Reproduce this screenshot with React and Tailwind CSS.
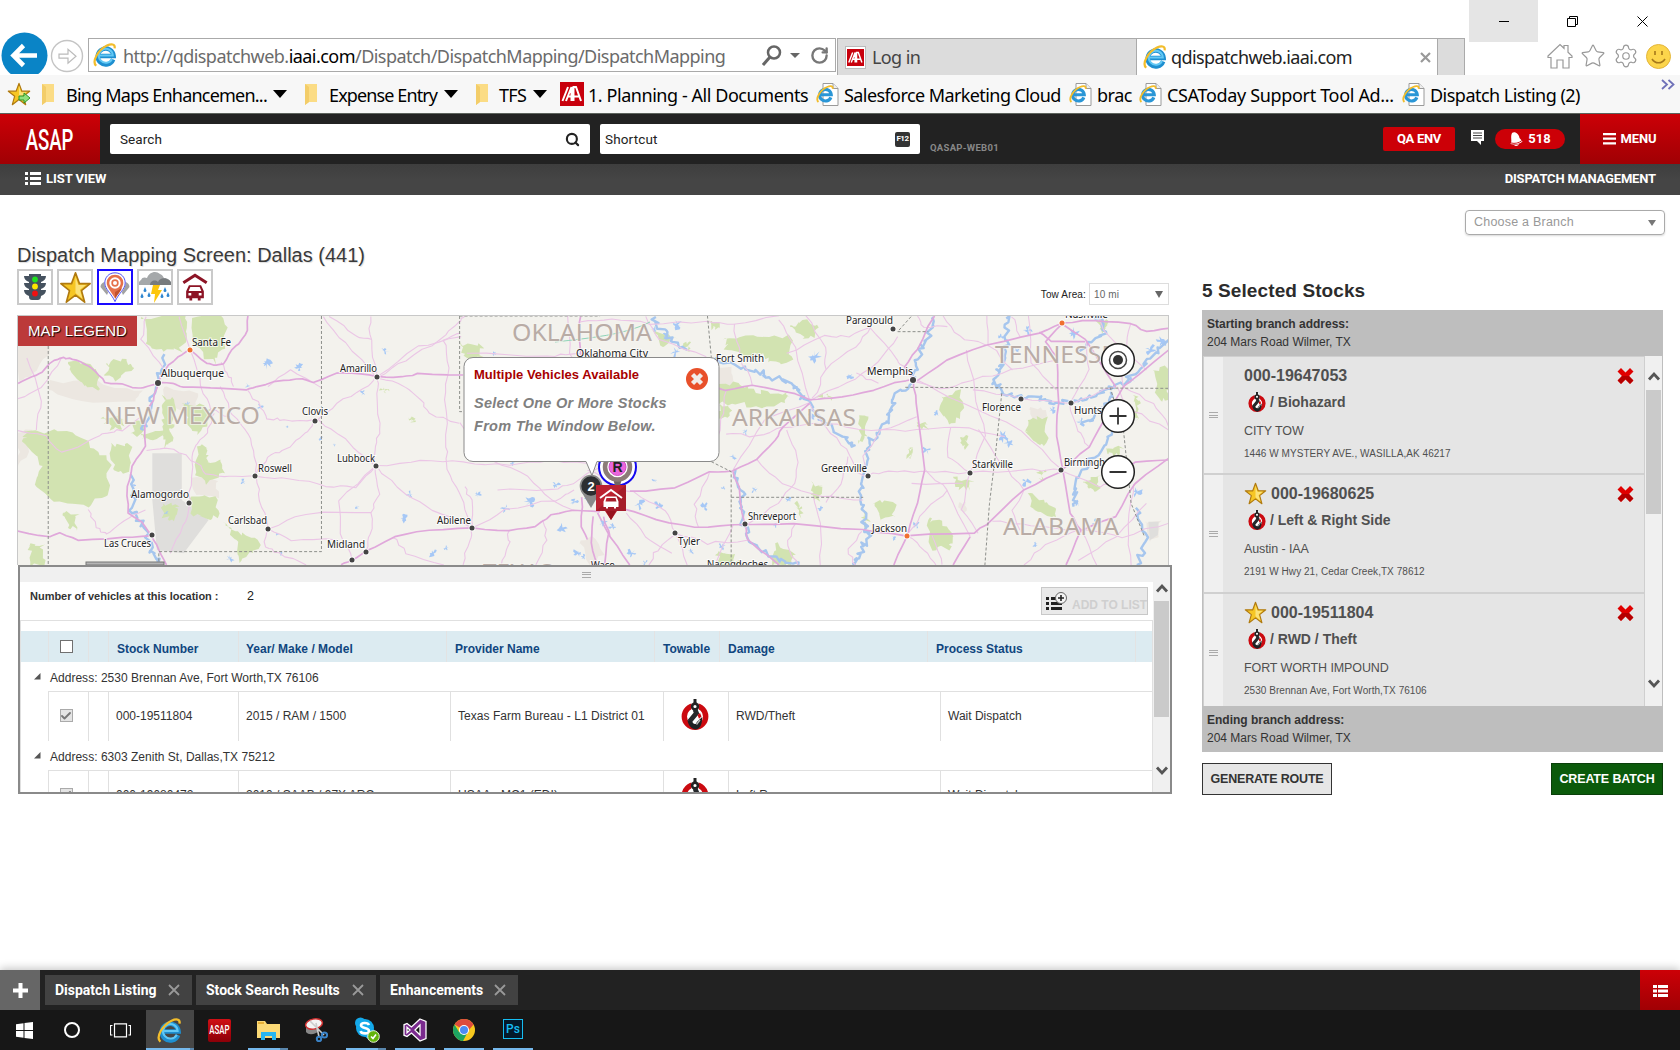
import React from 'react';
import { Search, RotateCw, Star, Settings, Check } from 'lucide-react';

const seg = "font-['Noto_Sans',sans-serif]";
const rob = "font-[Roboto,sans-serif]";

/* ---------- icons ---------- */
function IELogo({ size = 22 }) {
  return (
    <svg width={size} height={size} viewBox="0 0 24 24" className="shrink-0">
      <path d="M20.200 16.400A8 8 0 1 1 20.700 13H6.500" fill="none" stroke="#1e8fd0" strokeWidth="4.400" />
      <path d="M19 16A7 7 0 1 1 19.800 12.500H7" fill="none" stroke="#62c8f4" strokeWidth="2" />
      <path d="M3.200 22.800C-1.500 18.500 5 7 14 2.600c4-1.900 8.500-2 7.600 2.800" fill="none" stroke="#f2bd2c" strokeWidth="2.200" />
    </svg>
  );
}
function PageIE() {
  return (
    <svg width="23" height="23" viewBox="0 0 23 23" className="shrink-0">
      <path d="M7 .5h10l5 5v17H7z" fill="#fff" stroke="#9a9a9a" />
      <path d="M17 .5v5h5" fill="#eee" stroke="#9a9a9a" />
      <g transform="translate(0 2) scale(.76)">
        <path d="M19.500 16.200A7.600 7.600 0 1 1 20 12.800H6.500" fill="none" stroke="#2a96d6" strokeWidth="4.200" />
        <path d="M3.200 22.400C-1.500 18 6 6.200 14.500 2.600c4-1.800 8-2 7.600 2.600" fill="none" stroke="#f2bd2c" strokeWidth="2.400" />
      </g>
    </svg>
  );
}
function IAALogo({ size }) {
  return (
    <svg width={size} height={size} viewBox="0 0 24 24" className="shrink-0">
      <rect width="24" height="24" fill="#c8000c" />
      <path d="M2.500 19L8 5M6 19l5.500-14v14M13.500 19V5H16l5 14M8 14.500h3.500M13.500 14.500H19" fill="none" stroke="#fff" strokeWidth="2" />
    </svg>
  );
}
function Folder() {
  return (
    <svg width="14" height="23" viewBox="0 0 14 23" className="shrink-0">
      <path d="M1 1h12v18H5L1 22z" fill="#fbdc85" />
      <path d="M1 1l4 3v15L1 22z" fill="#f3cd69" />
    </svg>
  );
}
function Caret() {
  return <span className="h-0 w-0 shrink-0 border-x-[7px] border-t-[8px] border-x-transparent border-t-black" />;
}
function GoldStar({ size }) {
  return (
    <svg width={size} height={size} viewBox="0 0 36 36" className="shrink-0">
      <path d="M18 2l4.300 11.800H34l-9.500 7.500L28 34l-10-7.600L8 34l3.500-12.700L2 13.800h11.700z" fill="#f6c624" stroke="#b07a10" strokeWidth="1.800" strokeLinejoin="round" />
      <path d="M18 6v18l7.500 6-2.700-9.500 6.500-5.200H21z" fill="#fbe27a" />
    </svg>
  );
}
function Hook({ w, h }) {
  return (
    <svg width={w} height={h} viewBox="0 0 28 31" className="shrink-0">
      <circle cx="14" cy="17.500" r="10.700" fill="#fff" stroke="#cb0a10" strokeWidth="5.400" />
      <path d="M10.500 2h7v9h-7z" fill="#fff" />
      <path d="M14 0v5" stroke="#222" strokeWidth="3" />
      <circle cx="14" cy="7.500" r="2.900" fill="#fff" stroke="#222" strokeWidth="2.600" />
      <path d="M14 10.500l1.500 3.500-7 8.500" fill="none" stroke="#26282b" strokeWidth="4.800" />
      <path d="M6.500 21c.5 5.500 4.500 9.500 8.500 9.500 4.500-.4 6.200-6 6.200-12.500l-5.400 5c-.5 2.500-3 3-4.500-.2z" fill="#1f2225" />
      <path d="M16.500 16l2.500-2 1.500 3.500-2.500 2.200z" fill="#cb0a10" />
      <path d="M15.500 25.500l3.500-4.500" stroke="#bbb" strokeWidth="1.300" />
    </svg>
  );
}
function GarageCar({ color, size }) {
  return (
    <svg width={size} height={size} viewBox="0 0 28 30" className="shrink-0">
      <path d="M1.500 10.500L14 2.500 26.500 10.500" fill="none" stroke={color} strokeWidth="3.200" />
      <path fillRule="evenodd" fill={color} d="M7.500 13h13l3 6.500V27h-3.500v2.500h-3V27H11v2.500H8V27H4.500v-7.500zM9 15l-1.800 4.200h13.600L19 15zM7 21.500v2.500h3v-2.500zM18 21.500v2.500h3v-2.500z" />
    </svg>
  );
}
function RedX() {
  return (
    <svg width="17" height="18" viewBox="0 0 17 18" className="shrink-0">
      <path d="M4 1l4.500 4.500L13 1l3.500 3.500L12 9l4.500 4.500L13 17l-4.500-4.500L4 17 .5 13.500 5 9 .5 4.500z" fill="#e00000" />
      <path d="M.8 13.500L5 9h7l4.200 4.500L13 16.700l-4.500-4.500L4 16.700z" fill="#b40000" />
    </svg>
  );
}
function Chevron({ up }) {
  return (
    <svg width="14" height="11" viewBox="0 0 14 11">
      <path d={up ? 'M2 8.500L7 3l5 5.500' : 'M2 2.500L7 8l5-5.500'} fill="none" stroke="#555" strokeWidth="2.800" />
    </svg>
  );
}
function Grip() {
  return (
    <span className="flex h-[6px] w-[9px] flex-col justify-between">
      <i className="h-px bg-[#aaa]" /><i className="h-px bg-[#aaa]" /><i className="h-px bg-[#aaa]" />
    </span>
  );
}

/* ---------- browser chrome ---------- */
function Chrome() {
  return (
    <div className={`flex h-[75px] bg-white ${seg}`}>
      <div className="flex w-[1465px] items-end">
        <div className="mb-px h-[42px] w-[50px] overflow-hidden pl-px">
          <svg width="47" height="47" viewBox="0 0 47 47">
            <circle cx="23.500" cy="23.500" r="23" fill="#0a84c6" />
            <path d="M36 23.500H14M22.500 13.500l-10 10 10 10" fill="none" stroke="#fff" strokeWidth="4.600" />
          </svg>
        </div>
        <svg width="35" height="35" viewBox="0 0 35 35" className="mb-[1px]">
          <circle cx="17" cy="17" r="15.500" fill="#fff" stroke="#c4c4c4" strokeWidth="1.400" />
          <path d="M9 15.200h9v-5l8 7-8 7v-5H9z" fill="none" stroke="#bbb" strokeWidth="1.200" />
        </svg>
        <div className="mb-[3px] ml-[3px] flex h-[34px] w-[748px] items-center border border-[#aaa] pl-[4px]">
          <IELogo size={24} />
          <span className="ml-[6px] w-[604px] whitespace-nowrap pt-[2px] text-[18px] tracking-[-0.540px] text-[#6b6b6b]">
            http://qdispatchweb.<span className="text-black">iaai.com</span>/Dispatch/DispatchMapping/DispatchMapping
          </span>
          <svg className="ml-[35px]" width="20" height="21" viewBox="0 0 20 21"><circle cx="12" cy="7.500" r="6" fill="none" stroke="#666" strokeWidth="2.500" /><path d="M8 12l-7 8" stroke="#666" strokeWidth="3" /></svg>
          <span className="ml-[8px] border-x-[5px] border-t-[5px] border-x-transparent border-t-[#666]" />
          <RotateCw className="ml-[10px] text-[#777]" size={19} strokeWidth={3} />
        </div>
        <div className="ml-px flex h-[37px] w-[300px] items-center border border-b-0 border-[#aaa] bg-[#dcdcdc] pl-[7px]">
          <span className="flex h-[23px] w-[21px] items-center justify-center border border-[#bbb] bg-white"><IAALogo size={17} /></span>
          <span className="ml-[6px] text-[18px] tracking-[-0.600px] text-[#444]">Log in</span>
        </div>
        <div className="flex h-[37px] w-[300px] items-center border-t border-[#aaa] bg-white pl-[6px]">
          <IELogo size={24} />
          <span className="ml-[4px] w-[183px] whitespace-nowrap text-[18px] tracking-[-0.600px] text-[#222]">qdispatchweb.iaai.com</span>
          <svg className="ml-[66px]" width="11" height="11" viewBox="0 0 11 11"><path d="M1 1l9 9M10 1l-9 9" stroke="#999" strokeWidth="2.200" /></svg>
        </div>
        <div className="h-[37px] w-[28px] border border-b-0 border-[#aaa] bg-[#dcdcdc]" />
      </div>
      <div className="ml-[4px] flex w-[211px] flex-col">
        <div className="flex h-[42px]">
          <div className="flex w-[69px] items-center justify-center bg-[#e5e5e5]"><i className="h-px w-[10px] bg-black" /></div>
          <div className="flex w-[69px] items-center justify-center">
            <svg width="11" height="11" viewBox="0 0 11 11" fill="none" stroke="#000"><path d="M.5 2.500h8v8h-8zM2.500 2.500v-2h8v8h-2" /></svg>
          </div>
          <div className="flex w-[70px] items-center justify-center">
            <svg width="11" height="11" viewBox="0 0 11 11" stroke="#000"><path d="M.5.5l10 10M10.500.5l-10 10" /></svg>
          </div>
        </div>
        <div className="mt-[1px] flex items-center gap-[7px] pl-[78px] text-[#999]">
          <svg width="26" height="26" viewBox="0 0 26 26" fill="none" stroke="#999" strokeWidth="1.200"><path d="M1 13L13 1.500l4 3.800V2.500h4v6.800l4 3.700v1.500h-3V25h-6v-8h-6v8H4V14.500H1z" /></svg>
          <Star size={26} strokeWidth={1.100} />
          <Settings size={26} strokeWidth={1.100} />
          <svg width="25" height="25" viewBox="0 0 25 25">
            <circle cx="12.500" cy="12.500" r="12" fill="#fcd54b" stroke="#e3b53a" />
            <path d="M9 7v4M16 7v4M6 15c3 5 10 5 13 0" fill="none" stroke="#a5781b" strokeWidth="1.600" />
          </svg>
        </div>
      </div>
    </div>
  );
}

function Favorites() {
  const t = 'whitespace-nowrap pt-[2px] text-[18px] leading-[24px] text-black';
  return (
    <div className={`flex h-[39px] items-center border-b border-[#5c625c] bg-[#f7f7f7] pl-[7px] ${seg}`}>
      <span className="relative flex">
        <GoldStar size={24} />
        <svg className="absolute bottom-[2px] right-0" width="13" height="12" viewBox="0 0 13 12"><path d="M1 4h5V1l6 5-6 5V8H1z" fill="#8fe07c" stroke="#2d9424" /></svg>
      </span>
      <span className="ml-[10px] flex w-[263px] items-center"><Folder /><span className={`ml-[11px] w-[201px] tracking-[-0.780px] ${t}`}>Bing Maps Enhancemen...</span><span className="ml-[6px] flex"><Caret /></span></span>
      <span className="flex w-[171px] items-center"><Folder /><span className={`ml-[11px] w-[110px] tracking-[-0.880px] ${t}`}>Expense Entry</span><span className="ml-[5px] flex"><Caret /></span></span>
      <span className="flex w-[85px] items-center"><Folder /><span className={`ml-[10px] w-[29px] tracking-[-0.700px] ${t}`}>TFS</span><span className="ml-[5px] flex"><Caret /></span></span>
      <IAALogo size={24} />
      <span className={`ml-[4px] w-[228px] tracking-[-0.440px] ${t}`}>1. Planning - All Documents</span>
      <PageIE /><span className={`ml-[5px] w-[225px] tracking-[-0.580px] ${t}`}>Salesforce Marketing Cloud</span>
      <PageIE /><span className={`ml-[5px] w-[42px] tracking-[-0.500px] ${t}`}>brac</span>
      <PageIE /><span className={`ml-[5px] w-[235px] tracking-[-0.330px] ${t}`}>CSAToday Support Tool Ad...</span>
      <PageIE /><span className={`ml-[5px] w-[231px] tracking-[-0.520px] ${t}`}>Dispatch Listing (2)</span>
      <svg className="mb-[20px]" width="14" height="11" viewBox="0 0 14 11"><path d="M1 1l5 4.500L1 10M7.500 1l5 4.500-5 4.500" fill="none" stroke="#6f71b8" strokeWidth="1.800" /></svg>
    </div>
  );
}

/* ---------- application header ---------- */
function AppHeader() {
  return (
    <>
      <div className={`flex h-[50px] items-center bg-[#222] ${rob}`}>
        <div className="flex h-full w-[100px] items-center justify-center overflow-hidden bg-gradient-to-b from-[#cc0007] to-[#a00004]">
          <span className="scale-x-[.62] pt-[2px] text-[30px] font-medium leading-none text-white">ASAP</span>
        </div>
        <div className="ml-[10px] flex h-[30px] w-[480px] items-center justify-between rounded-[2px] bg-white pl-[10px] pr-[10px] text-[13.500px] tracking-[0.100px] text-[#222]">
          Search<Search size={15} strokeWidth={3.400} />
        </div>
        <div className="ml-[10px] flex h-[30px] w-[320px] items-center justify-between rounded-[2px] bg-white pl-[5px] pr-[10px] text-[13.500px] tracking-[0.150px] text-[#222]">
          Shortcut<span className="flex h-[15px] w-[15px] items-center justify-center rounded-[2px] bg-[#333] text-[8px] font-bold tracking-[-0.500px] text-white">F12</span>
        </div>
        <span className="ml-[10px] mt-[18px] w-[453px] text-[9.500px] font-bold tracking-[0.300px] text-[#888]">QASAP-WEB01</span>
        <div className="flex h-[24px] w-[72px] items-center justify-center rounded-[2px] bg-[#cc0007] text-[13px] font-bold tracking-[-0.300px] text-white">QA ENV</div>
        <svg className="mb-[2px] ml-[15px]" width="15" height="16" viewBox="0 0 15 16">
          <path d="M1 0h13v11h-3v4l-4-4H1z" fill="#fff" /><path d="M3 3h9M3 5.500h9M3 8h9" stroke="#444" strokeWidth="1.200" />
        </svg>
        <div className="ml-[10px] flex h-[20px] w-[70px] items-center justify-center gap-[5px] rounded-full bg-[#cc0007] text-[13px] font-bold text-white">
          <svg width="14" height="14" viewBox="0 0 14 14"><path d="M3 1c3-2 7 1 7.500 5l3 3.500C11 12 5 13 1.500 12 3.500 9 1 5 3 1z" fill="#fff" /><path d="M2 11c4 1 8 0 11-2.500" fill="none" stroke="#cc0007" strokeWidth=".9" /><path d="M5 13c1.500 1.500 4 1 5-.8" fill="#fff" /></svg>
          518
        </div>
        <div className="ml-[15px] flex h-full w-[100px] items-center justify-center gap-[4px] bg-gradient-to-b from-[#cc0007] to-[#a00004] text-[13px] font-bold tracking-[-0.100px] text-white">
          <svg width="13" height="12" viewBox="0 0 13 12"><path d="M0 0h13v2.200H0zM0 4.600h13v2.200H0zM0 9.200h13v2.200H0z" fill="#fff" /></svg>
          MENU
        </div>
      </div>
      <div className={`flex h-[31px] items-center justify-between bg-gradient-to-b from-[#3e3e3e] via-[#454545] to-[#454545] pb-[2px] pl-[25px] pr-[24px] text-[13px] font-bold text-white ${rob}`}>
        <span className="flex items-center gap-[5px] tracking-[-0.050px]">
          <svg width="16" height="13" viewBox="0 0 16 13"><path d="M0 0h3v3H0zM5 0h11v3H5zM0 5h3v3H0zM5 5h11v3H5zM0 10h3v3H0zM5 10h11v3H5z" fill="#fff" /></svg>
          LIST VIEW
        </span>
        <span className="tracking-[-0.160px]">DISPATCH MANAGEMENT</span>
      </div>
    </>
  );
}

/* ---------- map ---------- */
function noise(seed) {
  let s = seed * 7919 + 13;
  return () => {
    s = (s * 16807) % 2147483647;
    return s / 2147483647 - 0.5;
  };
}
function rough(str, amp, steps, close) {
  const p = str.split(' ').map((q) => q.split(',').map(Number));
  if (close) p.push(p[0]);
  const r = noise(p[0][0] + p.length);
  const out = [];
  for (let i = 0; i < p.length - 1; i++) {
    for (let k = 0; k < steps; k++) {
      const t = k / steps;
      out.push([
        p[i][0] + (p[i + 1][0] - p[i][0]) * t + r() * amp,
        p[i][1] + (p[i + 1][1] - p[i][1]) * t + r() * amp,
      ]);
    }
  }
  out.push(p[p.length - 1]);
  return out.map((q) => q.map((v) => v.toFixed(1)).join(',')).join(' ');
}
function blob(x, y, s) {
  const r = noise(Math.round(x * 3 + y));
  const out = [];
  for (let i = 0; i < 16; i++) {
    const a = (i / 16) * Math.PI * 2;
    const d = s * (0.65 + r() * 1.3);
    out.push(`${(x + Math.cos(a) * d).toFixed(1)},${(y + Math.sin(a) * d * 1.1).toFixed(1)}`);
  }
  return out.join(' ');
}

const WEST = {
  sand: [
    '47,348 125,348 125,470 90,520 47,540', '130,545 250,545 300,560 370,575 350,600 210,605 130,570',
    '430,560 520,580 510,640 430,620', '500,830 568,840 568,890 510,890', '47,700 80,690 70,760 47,800',
  ],
  gray: ['398,760 475,760 475,900 545,960 480,1060 410,1050 398,900'],
  green: [
    '370,350 490,350 490,400 470,450 420,450 380,420', '502,350 590,348 585,440 560,490 510,440',
    '178,485 230,490 260,530 258,570 215,555 190,520', '280,490 330,475 345,510 300,540 275,530',
    '70,700 180,690 240,740 285,780 280,880 230,915 140,910 90,850 110,790 60,720',
    '292,735 340,730 335,820 295,810', '345,670 378,665 370,700 345,705', '270,650 320,648 320,680 290,690',
    '430,590 455,600 455,680 425,700 425,640', '480,610 540,620 555,650 515,710 490,660', '515,740 540,740 540,790 580,785 580,820 545,850 510,830',
    '500,890 568,890 568,950 530,955 498,940', '590,970 625,1000 680,1025 650,1060 620,1085 615,1020',
    '165,935 200,940 200,985 185,980', '80,1035 110,1030 115,1095 80,1095', '1205,430 1258,430 1258,468 1235,485 1210,465',
    '430,670 450,720 430,740', '1068,655 1085,655 1080,662', '995,565 1010,570 1005,580', '425,915 465,915 460,960 430,950', '370,700 430,690 420,715 375,720',
  ],
  hwy: [
    '47,550 85,530 110,515 140,480 165,473 190,478 220,490 250,515 275,548 320,552 360,566 385,560 412,549 450,550 480,562 550,564 645,571 670,560 740,540 790,538 820,546 880,520 920,518 985,530 1050,532 1090,522 1210,525',
    '648,348 648,390 625,430 605,450 585,490 565,497 540,490 497,450 465,470 430,510 412,549 400,600 378,650 380,740 345,800 333,860 335,940 370,965 397,1005 415,1050 435,1095',
    '47,995 130,1012 155,998 205,1023 320,1012 397,1007',
    '890,1095 920,1080 956,1055 1030,1010 1120,990 1235,984 1330,994 1400,978 1440,945 1500,932 1568,935',
    '1518,348 1512,400 1520,480', '1520,890 1520,980 1548,1050 1548,1095', '1560,940 1590,1000 1580,1095',
  ],
  road: [
    '985,530 985,600 993,690 980,740 980,798', '983,798 1100,785 1210,786 1330,795 1440,780 1568,795', '965,348 968,420 985,530', '860,348 930,410 970,418', '985,530 1060,480 1150,420 1200,365 1215,348',
    '985,530 1060,560 1100,600 1120,640 1200,670', '1205,400 1160,420 1170,500 1165,600 1165,740 1170,810 1200,880 1235,984',
    '820,663 745,660 700,655 680,615 648,572', '820,670 800,700 740,750 700,770 668,828', '985,530 950,570 880,610 830,660', '830,660 900,720 980,798',
    '668,828 760,835 850,860 930,860 980,800', '668,828 665,750 640,690 600,630 575,560', '500,455 525,560 555,630 600,650', '668,828 680,900 700,987 800,940 970,938',
    '980,800 885,900 890,1000 920,1080', '700,987 690,1040 730,1060 800,1095', '495,909 500,800 510,740 540,700 560,640', '495,909 480,980 445,1060',
    '385,748 450,745 515,790 540,820 600,830 668,828', '47,690 120,710 160,760 220,730 270,700 320,690 370,650', '70,470 110,600 95,690', '230,925 250,980 280,1005 320,960 380,930',
    '980,800 1060,880 1130,930 1235,984', '1235,984 1225,1020 1210,1095', '1235,984 1230,900 1215,860', '1030,1010 1060,1060 1160,1095', '840,560 760,510 700,560',
    '1200,670 1290,780 1380,830 1440,900 1500,932', '1568,800 1500,850 1440,870 1300,870', '985,530 900,430 845,350', '985,530 1090,440 1205,410', '470,350 497,450', '380,348 370,420 430,510',
    '1330,994 1330,1040 1310,1095', '1420,960 1430,1020 1400,1095', '1235,984 1320,930 1450,900 1500,870', '955,1055 970,1000 970,938 990,880 980,800', '575,490 600,530 610,560', '47,600 110,560 160,475',
    '1568,470 1500,460 1430,470 1220,460', '1480,348 1490,460 1530,520', '700,990 760,1020 880,1020',
  ],
  river: ['435,470 400,560 390,640 375,690', '350,820 345,930 375,970 400,1060 420,1095'],
  dash: ['126,348 126,1095', '840,348 840,1055 415,1055 415,1095', '1201,348 1201,635 1225,635', '1201,348 1568,348'],
  lakes: [[697, 490, 13], [782, 503, 11], [1005, 453, 11], [648, 558, 8], [490, 612, 7], [680, 620, 8], [948, 578, 7], [838, 715, 6], [635, 845, 7], [1072, 885, 10], [1055, 955, 11], [932, 922, 6], [1248, 883, 10], [1320, 925, 11], [1385, 905, 14], [1452, 855, 11], [1468, 985, 12], [1500, 905, 10], [1132, 1060, 12], [1165, 1045, 6], [1510, 1060, 12], [725, 1003, 6], [735, 1058, 7], [600, 1075, 11], [1290, 462, 8], [873, 735, 4], [348, 855, 8], [435, 940, 6], [1340, 790, 7], [750, 680, 4]],
};
const EAST = {
  sand: ['1170,415 1215,415 1215,450 1180,445', '1480,755 1515,755 1515,795 1490,820', '990,700 1010,700 1010,725 990,725', '0,820 30,800 60,850 20,885', '340,300 390,290 400,350 350,370'],
  gray: ['1485,755 1512,755 1510,795 1490,810'],
  green: [
    '380,205 450,200 550,200 550,275 500,280 480,250 430,260 380,240', '340,155 360,155 360,175 345,175', '550,165 590,150 625,165 610,205 575,195', '340,355 400,340 440,355 490,370 545,365 540,400 460,410 400,400 340,395',
    '945,380 1000,360 995,440 960,460 940,420', '1170,450 1220,440 1220,520 1190,525 1168,490', '730,445 755,440 745,500 730,515', '1000,500 1012,500 1010,535 998,530', '770,700 825,690 820,740 785,750', '910,750 940,755 970,800 968,835 915,835',
    '1170,670 1210,690 1245,720 1235,745 1190,725', '975,620 1025,630 1020,655 985,655', '1320,630 1360,610 1355,660 1330,660', '510,820 560,850 555,885 500,885', '1500,300 1538,290 1538,390 1510,390', '1378,535 1415,530 1412,555 1380,550', '1450,380 1465,400 1455,450 1447,430',
    '860,540 872,540 868,560 855,560', '885,460 905,460 905,475 885,475', '560,700 580,710 575,740', '610,640 630,650 625,690 610,680', '190,180 250,200 220,235', '270,220 295,215 280,245', '370,400 400,420 370,450 360,430', '620,380 645,375 660,390', '1350,150 1385,155 1370,185', '360,850 400,860 430,885 360,885', '740,720 752,750 742,780', '1195,610 1215,600 1205,630',
  ],
  hwy: [
    '870,330 820,340 740,370 660,385 600,390 560,370 450,345 380,360 350,350', '880,330 960,270 1060,225 1200,190 1260,160', '110,715 200,750 300,773 400,765 560,762 740,780 850,797 1030,790 1075,750 1160,660 1250,610 1260,600',
    '130,665 250,655 340,605 400,603 460,570 510,510 530,470 600,400', '925,137 880,240 850,290 870,330 880,400 900,600 880,700 855,797 820,885', '1260,160 1215,215 1245,260 1250,400 1245,500 1260,600 1280,730 1310,780 1270,885',
    '1260,160 1320,210 1400,350', '1260,160 1340,150 1440,160 1480,185 1538,175', '1200,185 1230,215 1320,215', '1260,600 1330,530 1370,450 1420,350 1538,240', '1310,780 1400,740 1450,640 1538,565', '1390,640 1450,575 1538,570',
    '35,740 30,820 45,885', '60,740 80,800 130,885', '398,603 415,650 430,765 440,810 520,885', '1020,800 975,885',
  ],
  road: [
    '870,330 1000,400 1150,480 1260,600', '1260,600 1350,650 1390,640', '0,155 80,150 180,160 330,155 400,160 520,137', '400,160 420,260 450,345', '520,150 560,230 600,390', '610,385 640,300 720,230 760,170', '760,170 700,200 640,200 540,250', '760,170 830,270 850,290', '600,390 700,340 780,280 830,200',
    '600,400 640,470 700,540 720,600 750,620', '600,400 480,450 400,600', '530,470 640,460 760,480 880,480 980,470 1110,500', '460,570 530,640 630,680 740,690', '750,617 810,600 890,605 1020,610 1160,600 1260,600', '750,617 740,560 790,480 880,440',
    '870,330 940,360 1020,330 1130,300 1245,270', '1020,608 1000,720 1040,790', '900,600 960,660 1020,800', '1020,608 1060,500 1030,360 1010,240', '1030,360 1150,385 1280,400 1400,350', '1040,480 1100,580 1160,660', '855,797 900,720 960,660',
    '855,797 900,840 930,885', '430,765 520,700 560,640 570,560 540,480', '630,885 630,760 610,680', '250,790 220,720 140,665', '250,790 330,820 440,810', '250,790 200,840 180,885', '250,790 280,885', '340,605 300,700 310,773', '120,730 170,800 240,850',
    '170,137 210,210 330,260', '950,137 990,200 1060,225', '1060,137 1070,225 1130,300', '1320,210 1330,300 1280,400', '1400,350 1440,420 1538,480', '1280,400 1300,480 1330,530', '1310,780 1220,820 1160,885', '1310,780 1350,885', '1310,780 1420,800 1538,760',
    '1450,640 1430,760 1440,885', '1150,780 1130,720 1160,660', '880,137 900,170 960,170', '1130,137 1150,200', '740,780 700,840 720,885', '560,762 540,830 570,885', '950,885 920,797', '640,300 640,230 590,137', '720,310 780,340', '1075,750 1180,770 1310,780',
    '1420,350 1500,400 1538,470', '1350,137 1370,190 1480,300', '1440,160 1420,250 1420,350', '380,360 370,450 340,570', '380,490 460,500 530,470', '640,700 680,640 700,560', '870,640 1000,640', '1300,870 1400,800 1480,700', '20,600 90,640 130,665', '1170,137 1180,280 1245,360', '970,470 960,560 1020,608', '350,885 400,765',
  ],
  river: [
    '925,140 910,200 885,260 870,330 820,380 810,440 780,490 750,520 740,600 735,680 745,760 755,800 730,850 720,885', '350,270 430,290 500,320 560,345 590,390 640,460 700,510 720,525',
    '1120,137 1115,220 1100,290 1080,330 1100,370 1180,380 1230,400 1300,390 1360,370 1420,340 1480,280 1538,210', '1400,480 1340,560 1300,640 1290,710', '395,600 430,660 420,740 450,820 520,870 570,885', '1455,720 1480,800 1455,885', '190,137 230,200 280,240', '1310,470 1370,420 1390,370', '1300,240 1370,190 1350,137',
  ],
  dash: ['333,137 343,260 343,300', '343,575 395,605 395,885', '395,682 740,682', '865,140 830,185 910,185', '850,352 1538,355', '1102,370 1085,560 1070,700 1058,885', '1385,352 1420,480 1440,700 1475,800'],
  lakes: [[612, 260, 17], [705, 320, 9], [605, 440, 11], [432, 485, 9], [400, 560, 11], [255, 165, 12], [250, 245, 14], [195, 180, 9], [195, 632, 7], [325, 710, 11], [155, 702, 14], [205, 705, 12], [85, 770, 11], [135, 850, 12], [290, 845, 8], [370, 830, 11], [455, 660, 8], [375, 655, 6], [905, 540, 11], [930, 430, 8], [1105, 500, 14], [1120, 520, 11], [1165, 635, 12], [1170, 180, 12], [1290, 190, 14], [1140, 240, 8], [1310, 455, 12], [1235, 420, 9], [1190, 825, 8], [1455, 665, 14], [1350, 760, 11], [880, 765, 12], [1490, 240, 14], [1520, 215, 14], [1440, 330, 12], [630, 715, 8], [545, 690, 8], [510, 765, 9], [820, 805, 6], [225, 200, 12], [1300, 700, 9], [20, 690, 9], [60, 760, 11], [10, 860, 8], [170, 880, 9], [1100, 200, 8], [480, 315, 8]],
};
function MapLayer({ d, transform }) {
  const v = { vectorEffect: 'non-scaling-stroke' };
  return (
    <g transform={transform} fill="none" strokeLinejoin="round">
      {d.sand.map((p) => <polygon key={p} points={rough(p, 12, 4, true)} fill="#ece7e1" />)}
      {d.gray.map((p) => <polygon key={p} points={p} fill="#dfdedc" />)}
      {d.green.map((p) => <polygon key={p} points={rough(p, 16, 5, true)} fill="#d2e3b1" />)}
      {d.lakes.map(([x, y, s]) => <polygon key={`${x}-${y}`} points={blob(x, y, s)} fill="#a6c8f6" />)}
      {d.river.map((p) => <polyline key={p} points={rough(p, 18, 8)} stroke="#a6c6ee" strokeWidth="2.400" {...v} />)}
      {d.road.map((p) => <polyline key={p} points={rough(p, 8, 4)} stroke="#ebc6e6" strokeWidth="1.100" {...v} />)}
      {d.hwy.map((p) => <polyline key={p} points={rough(p, 4, 3)} stroke="#e0a8db" strokeWidth="1.700" {...v} />)}
      {d.dash.map((p) => <polyline key={p} points={p} stroke="#8d8f8b" strokeWidth="1" strokeDasharray="3 2" {...v} />)}
    </g>
  );
}
const STATES = [
  ['NEW MEXICO', 104, 424, 156], ['OKLAHOMA', 512, 341, 140], ['ARKANSAS', 732, 426, 124], ['TENNESSEE', 995, 363, 134], ['ALABAMA', 1003, 535, 116], ['TEXAS', 483, 581, 70],
];
const TOWNS = [
  ['Santa Fe', 192, 346, 39, 190, 350, 1], ['Albuquerque', 161, 377, 63, 158, 383, 2], ['Amarillo', 340, 372, 37, 377, 377], ['Clovis', 302, 415, 26, 315, 421], ['Lubbock', 337, 462, 38, 376, 466],
  ['Roswell', 258, 472, 34, 255, 476], ['Alamogordo', 131, 498, 58, 189, 503], ['Carlsbad', 228, 524, 39, 268, 529], ['Las Cruces', 104, 547, 47, 152, 535], ['Midland', 327, 548, 38, 366, 552],
  ['', 0, 0, 0, 352, 560], ['Abilene', 437, 524, 34, 472, 528], ['Oklahoma City', 576, 357, 72, 0, 0], ['Fort Smith', 716, 362, 48, 0, 0], ['Paragould', 846, 324, 47, 893, 329], ['Memphis', 867, 375, 46, 913, 380, 2],
  ['Florence', 982, 411, 39, 1021, 399], ['Huntsville', 1074, 414, 46, 1071, 403], ['Starkville', 972, 468, 41, 970, 473], ['Birmingham', 1064, 466, 55, 1061, 470], ['Greenville', 821, 472, 46, 868, 476],
  ['Jackson', 872, 532, 35, 907, 536, 1], ['Shreveport', 748, 520, 48, 745, 524], ['Tyler', 678, 545, 22, 675, 533], ['Nashville', 1065, 318, 43, 1062, 323, 1], ['Nacogdoches', 707, 568, 61, 0, 0], ['Waco', 591, 569, 24, 0, 0],
];
function MapView() {
  return (
    <div className="relative h-[250px] w-[1152px] overflow-hidden border border-b-0 border-[#c8c8c8]">
      <svg width="1150" height="249" viewBox="18 316 1150 249" className="block">
        <rect x="18" y="316" width="1150" height="249" fill="#f3f2ed" />
        <MapLayer d={WEST} transform="translate(0 200) scale(.3827 .3333)" />
        <MapLayer d={EAST} transform="translate(580 270) scale(.3827 .3333)" />
        <path d="M555 342C590 338 625 335 650 322" fill="none" stroke="#8fd4b8" strokeWidth="1" />
        <g fill="#b9aca6" stroke="#f6f5f1" strokeOpacity=".7" strokeWidth="2" paintOrder="stroke" fontSize="23.500" fontFamily="'Noto Sans', sans-serif">
          {STATES.map(([n, x, y, w]) => <text key={n} x={x} y={y} textLength={w} lengthAdjust="spacingAndGlyphs">{n}</text>)}
        </g>
        <rect x="86" y="562" width="78" height="3" fill="#b5b5b5" stroke="#777" />
        <g fontSize="10.500" fill="#222" stroke="#fff" strokeOpacity=".8" strokeWidth="2" paintOrder="stroke" fontFamily="'Noto Sans', sans-serif">
          {TOWNS.map(([n, x, y, w, cx, cy, k]) => (
            <g key={n + cx}>
              {cx > 0 && <circle cx={cx} cy={cy} r={k === 2 ? 3 : 2.500} fill={k === 1 ? '#f07030' : '#444'} stroke="#fff" strokeWidth="2" />}
              {n && <text x={x} y={y} textLength={w} fontSize={k === 2 ? 11.500 : 10.500} lengthAdjust="spacingAndGlyphs">{n}</text>}
            </g>
          ))}
        </g>
        <g fill="#fff" stroke="#222" strokeWidth="1.500">
          <circle cx="1118" cy="360" r="16.300" /><circle cx="1118" cy="416" r="16.300" /><circle cx="1118" cy="472" r="16.300" />
          <circle cx="1118" cy="360" r="8.500" stroke="#444" /><circle cx="1118" cy="360" r="5" fill="#333" stroke="none" />
          <path d="M1109.500 416h17M1118 407.500v17M1109.500 472h17" fill="none" stroke="#333" strokeWidth="1.800" />
        </g>
        <circle cx="617.500" cy="467" r="18.500" fill="#fff" stroke="#1408f0" strokeWidth="2" />
        <path d="M613 478l2 8h5l2-8z" fill="#6f6562" />
        <circle cx="617.500" cy="467" r="12.500" fill="#fff" stroke="#8c7c78" strokeWidth="4.500" />
        <circle cx="617.500" cy="467" r="8.500" fill="#ea66dc" stroke="#d04cc4" />
        <text x="617.500" y="472" textAnchor="middle" fontSize="14" fontWeight="bold" fill="#222" fontFamily="'Liberation Sans', sans-serif">R</text>
        <path d="M581 491l10 17 10-17z" fill="#8a8a8a" />
        <circle cx="591" cy="486" r="10.500" fill="#2d2f31" stroke="#8a8a8a" strokeWidth="1.600" />
        <text x="591" y="490.500" textAnchor="middle" fontSize="13" fontWeight="bold" fill="#fff" fontFamily="'Liberation Sans', sans-serif">2</text>
        <path d="M596 485h30v26h-9l-6 9-6-9h-9z" fill="#bb2230" />
        <path d="M626 485v26h-30z" fill="#8f1624" opacity=".5" />
        <path d="M606 511h10l-5 9z" fill="#96131f" />
        <path d="M600 498l11-8 11 8" fill="none" stroke="#fff" strokeWidth="2" />
        <path fillRule="evenodd" fill="#fff" d="M605.500 496.500h11l2 5v5.500h-2.500v1.500h-2v-1.500h-6v1.500h-2v-1.500h-2.500v-5.500zM606.500 498l-1 3.500h11l-1-3.500z" />
        <path d="M473 357.500h237a9 9 0 0 1 9 9v86a9 9 0 0 1-9 9H597l-5 14-6-14H473a9 9 0 0 1-9-9v-86a9 9 0 0 1 9-9z" fill="#fff" stroke="#8a8a8a" />
      </svg>
      <div className="absolute left-0 top-0 flex h-[30px] w-[119px] items-center justify-center bg-[#bc3a3a] text-[15px] tracking-[0.100px] text-white [text-shadow:1px_1px_1px_#000]">MAP LEGEND</div>
      <div className="absolute left-[456px] top-[50px] w-[230px]">
        <p className="text-[13px] font-bold leading-[17px] tracking-[0.020px] text-[#a80000]">Multiple Vehicles Available</p>
        <p className="mt-[9px] text-[14.500px] font-bold italic leading-[23px] tracking-[0.270px] text-[#808080]">Select One Or More Stocks<br />From The Window Below.</p>
      </div>
      <svg className="absolute left-[668px] top-[52px]" width="22" height="22" viewBox="0 0 22 22">
        <circle cx="11" cy="11" r="11" fill="#e8502a" /><path d="M6.500 6.500l9 9M15.500 6.500l-9 9" stroke="#f1ece8" strokeWidth="4.400" />
      </svg>
    </div>
  );
}

/* ---------- vehicles panel ---------- */
function Box({ checked }) {
  return (
    <span className={checked ? 'flex h-[13px] w-[13px] items-center justify-center border border-[#aaa] bg-[#e4e4e4]' : 'h-[13px] w-[13px] border border-[#707070] bg-white'}>
      {checked && <Check size={12} strokeWidth={3.800} className="shrink-0 text-[#777]" />}
    </span>
  );
}
function Group({ address, cells, h }) {
  const c = 'flex items-center border-l border-[#e0e0e0] pb-[2px]';
  return (
    <>
      <div className="flex h-[29px] items-center pl-[13px] text-[12px] text-[#333]">
        <svg width="7" height="7" viewBox="0 0 7 7"><path d="M6.500 0v6.500H0z" fill="#555" /></svg>
        <span className="ml-[9px] mt-[3px] tracking-[0.020px]">Address: {address}</span>
      </div>
      <div className={`ml-[27px] flex border-t border-[#e0e0e0] text-[12px] text-[#333] ${h}`}>
        <div className={`${c} w-[40px] justify-center pr-[5px]`}><Box checked /></div>
        <div className={`${c} w-[20px]`} />
        <div className={`${c} w-[130px] pl-[7px]`}>{cells[0]}</div>
        <div className={`${c} w-[212px] pl-[7px]`}>{cells[1]}</div>
        <div className={`${c} w-[213px] pl-[7px] tracking-[0.040px]`}>{cells[2]}</div>
        <div className="flex w-[65px] items-center justify-center border-l border-[#e0e0e0] pb-[5px] pr-[2px]"><Hook w={28} h={31} /></div>
        <div className={`${c} w-[212px] pl-[7px]`}>{cells[3]}</div>
        <div className={`${c} flex-1 pl-[7px]`}>{cells[4]}</div>
      </div>
    </>
  );
}
function VehiclesPanel() {
  const h = 'flex items-center border-l border-[#e3e3e3] pl-[8px] pt-[5px]';
  return (
    <div className="ml-px flex h-[229px] w-[1154px] overflow-hidden border-2 border-[#8a8a8a] bg-white">
      <div className="w-[1133px]">
        <div className="flex h-[15px] items-center justify-center bg-[#f0f0f0]"><Grip /></div>
        <div className="flex h-[38px] items-start pl-[10px] pr-[5px]">
          <span className="mt-[6px] w-[217px] text-[11px] font-bold tracking-[-0.010px] text-[#333]">Number of vehicles at this location :</span>
          <span className="mt-[5px] text-[12.500px] text-[#222]">2</span>
          <div className="ml-auto mt-[5px] flex h-[28px] w-[107px] items-center overflow-hidden border border-[#c8c8c8] bg-[#e9e9e9] pl-[4px]">
            <svg width="21" height="19" viewBox="0 0 21 19" className="shrink-0">
              <path d="M0 5h3v3H0zM5 5h8v3H5zM0 10h3v3H0zM5 10h11v3H5zM0 15h3v3H0zM5 15h11v3H5z" fill="#222" />
              <circle cx="15" cy="6" r="5.500" fill="#f4f4f4" stroke="#666" /><path d="M12 6h6M15 3v6" stroke="#222" strokeWidth="1.600" />
            </svg>
            <span className="ml-[5px] mt-[7px] whitespace-nowrap text-[12px] font-bold text-[#cfcfcf]">ADD TO LIST</span>
          </div>
        </div>
        <div className="h-[180px] border-l border-r border-t border-[#e0e0e0]">
          <div className="mt-[10px] flex h-[31px] bg-[#dcebf1] text-[12px] font-bold text-[#10467f]">
            <div className="w-[27px]" />
            <div className="flex w-[40px] items-center justify-center border-l border-[#e3e3e3] pr-[5px]"><Box /></div>
            <div className={`${h} w-[20px]`} />
            <div className={`${h} w-[130px]`}>Stock Number</div>
            <div className="flex w-[208px] items-center border-l border-[#e3e3e3] pl-[7px] pt-[5px]">Year/ Make / Model</div>
            <div className={`${h} w-[208px]`}>Provider Name</div>
            <div className={`${h} w-[65px]`}>Towable</div>
            <div className={`${h} w-[208px]`}>Damage</div>
            <div className={`${h} w-[208px]`}>Process Status</div>
            <div className={`${h} flex-1`} />
          </div>
          <Group address="2530 Brennan Ave, Fort Worth,TX 76106" h="h-[50px]" cells={['000-19511804', '2015 / RAM / 1500', 'Texas Farm Bureau - L1 District 01', 'RWD/Theft', 'Wait Dispatch']} />
          <Group address="6303 Zenith St, Dallas,TX 75212" h="h-[50px]" cells={['000-19680472', '2010 / SAAB / 97X ARC', 'USAA - MC1 (EDI)', 'Left Rear', 'Wait Dispatch']} />
        </div>
      </div>
      <div className="flex w-[17px] flex-col items-center bg-[#f0f0f0]">
        <div className="flex h-[34px] items-end pb-[7px]"><Chevron up /></div>
        <div className="h-[116px] w-[15px] bg-[#cacaca]" />
        <div className="mt-[48px]"><Chevron /></div>
      </div>
    </div>
  );
}

/* ---------- tool icons ---------- */
function ToolIcons() {
  const b = 'flex h-[36px] w-[36px] items-center justify-center border-2 border-[#cacaca]';
  return (
    <div className="flex gap-[4px]">
      <div className={b}>
        <svg width="24" height="28" viewBox="0 0 24 28">
          <path d="M1 3h5V1h12v2h5c0 3-2 5-5 6v1h5c0 3-2 5-5 6v1h5c0 3-2 5-5 6 0 3-2 4-3 4H9c-2 0-3-1-3-4-3-1-5-3-5-6h5v-1c-3-1-5-3-5-6h5V9C3 8 1 6 1 3z" fill="#45525f" />
          <circle cx="12" cy="6.500" r="2.900" fill="#20e020" /><circle cx="12" cy="13.500" r="2.900" fill="#ffe600" /><circle cx="12" cy="20.500" r="2.900" fill="#f01010" />
        </svg>
      </div>
      <div className={b}><GoldStar size={33} /></div>
      <div className="flex h-[36px] w-[36px] items-center justify-center border-2 border-[#1a0aff]">
        <svg width="32" height="30" viewBox="0 0 32 30" className="shrink-0">
          <path d="M1.500 15a5 5 0 1 1 10 0L8 23zM20.500 15a5 5 0 1 1 10 0L24 23z" fill="#a2a2a2" />
          <path d="M16 1.500c5.500 0 9.500 4 9.500 9.500 0 6-6 10-9.500 18C12.500 21 6.500 17 6.500 11c0-5.500 4-9.500 9.500-9.500z" fill="#e5714b" stroke="#fff" strokeWidth="2.400" />
          <path d="M16 .8c6 0 10.200 4.400 10.200 10.200 0 6.200-6.700 10.500-10.200 18.600C12.500 21.500 5.800 17.200 5.800 11 5.800 5.200 10 .8 16 .8z" fill="none" stroke="#2a2af0" strokeWidth=".8" />
          <path d="M16 27c3-5 6-8 7-11l-7 4z" fill="#c2512f" />
          <circle cx="16" cy="11" r="4.700" fill="none" stroke="#fff" strokeWidth="2" /><circle cx="16" cy="11" r="2" fill="#fff" />
        </svg>
      </div>
      <div className={b}>
        <svg width="32" height="32" viewBox="0 0 32 32" className="shrink-0">
          <path d="M2 9c1-3 4-3 6-2 2-6 9-8 13-4 3 1 3 3 4 4 4 0 7 2 7 7H0c-.5-2 0-4 2-5z" fill="#a5a8aa" />
          <path d="M11 14c0-4 5-6 8-3 2-5 9-5 13 0v3z" fill="#777b7e" />
          <path d="M14 14h7l-2 5h4l-8 13 1-9h-4z" fill="#fdc60b" />
          <path d="M6 16l1.500 3.500a1.500 1.500 0 1 1-3 0zM3 22l1.500 3.500a1.500 1.500 0 1 1-3 0zM10 21l1.500 3.500a1.500 1.500 0 1 1-3 0zM26 16l1.500 3.500a1.500 1.500 0 1 1-3 0zM29 21l1.500 3.500a1.500 1.500 0 1 1-3 0zM23 22l1.500 3.500a1.500 1.500 0 1 1-3 0z" fill="#2f86d0" />
        </svg>
      </div>
      <div className={b}><GarageCar color="#8c1425" size={28} /></div>
    </div>
  );
}

/* ---------- selected stocks ---------- */
function Stock({ star, number, damage, provider, address, box }) {
  return (
    <div className={`flex ${box}`}>
      <div className="flex w-[19px] items-center justify-center bg-[#f0f0f0]"><Grip /></div>
      <div className="flex flex-1 flex-col pl-[21px] pr-[10px] text-[#505050]">
        <div className="mt-[7px] flex h-[24px] items-center">
          {star && <span className="mb-px mr-[4px] flex"><GoldStar size={23} /></span>}
          <span className="text-[16px] font-bold">{number}</span>
          <span className="ml-auto flex"><RedX /></span>
        </div>
        <div className="mt-[3px] flex h-[22px] items-center pl-[4px]"><Hook w={18} h={20} /><span className="ml-[4px] text-[14px] font-bold">/ {damage}</span></div>
        <div className="mt-[9px] text-[12.500px] leading-[18px] tracking-[-0.100px]">{provider}</div>
        <div className="mt-[6px] text-[10px] leading-[16px] tracking-[0.050px]">{address}</div>
      </div>
    </div>
  );
}
function Selected() {
  const head = 'flex h-[46px] flex-col justify-center bg-[#bebebe] pl-[5px] text-[12px] leading-[18px] text-[#333]';
  return (
    <div className="w-[461px]">
      <h2 className="mt-[-3px] h-[24px] text-[19px] font-bold leading-[22px] tracking-[0.100px] text-[#2c2c2c]">5 Selected Stocks</h2>
      <div className="mt-[6px]">
        <div className={head}><b>Starting branch address:</b><span>204 Mars Road Wilmer, TX</span></div>
        <div className="flex h-[350px] overflow-hidden border-x border-[#bebebe]">
          <div className="flex w-[442px] shrink-0 flex-col gap-[2px] border-l border-r border-t border-[#cfcfcf] bg-[#d0d0d0]">
            <Stock box="h-[116px] shrink-0 bg-[#e5e5e5]" number="000-19647053" damage="Biohazard" provider="CITY TOW" address="1446 W MYSTERY AVE., WASILLA,AK 46217" />
            <Stock box="h-[117px] shrink-0 bg-[#e5e5e5]" star number="000-19680625" damage="Left & Right Side" provider="Austin - IAA" address="2191 W Hwy 21, Cedar Creek,TX 78612" />
            <Stock box="h-[117px] shrink-0 bg-[#e5e5e5]" star number="000-19511804" damage="RWD / Theft" provider="FORT WORTH IMPOUND" address="2530 Brennan Ave, Fort Worth,TX 76106" />
          </div>
          <div className="flex flex-1 flex-col items-center bg-[#f0f0f0]">
            <div className="flex h-[34px] items-end pb-[8px]"><Chevron up /></div>
            <div className="h-[124px] w-[15px] bg-[#cacaca]" />
            <div className="mt-[164px]"><Chevron /></div>
          </div>
        </div>
        <div className={head}><b>Ending branch address:</b><span>204 Mars Road Wilmer, TX</span></div>
      </div>
      <div className="mt-[11px] flex justify-between text-[12.500px] font-bold">
        <div className="flex h-[32px] w-[130px] items-center justify-center whitespace-nowrap border border-[#333] bg-[#e6e6e6] tracking-[-0.200px] text-[#333]">GENERATE ROUTE</div>
        <div className="flex h-[32px] w-[112px] items-center justify-center whitespace-nowrap border border-[#0a3f0a] bg-[#0b5a0b] tracking-[-0.130px] text-white">CREATE BATCH</div>
      </div>
    </div>
  );
}

/* ---------- bottom bars ---------- */
function Tab({ label, w }) {
  return (
    <div className={`flex h-[30px] items-center justify-between bg-[#424242] pl-[10px] pr-[12px] ${w}`}>
      {label}
      <svg width="12" height="12" viewBox="0 0 12 12"><path d="M1 1l10 10M11 1L1 11" stroke="#999" strokeWidth="1.800" /></svg>
    </div>
  );
}
function BottomTabs() {
  return (
    <div className={`flex h-[40px] items-center bg-[#222] text-[14px] font-bold text-white shadow-[0_-2px_8px_rgba(0,0,0,0.22)] ${rob}`}>
      <div className="flex h-full w-[40px] items-center justify-center bg-[#666]"><svg width="15" height="15" viewBox="0 0 15 15"><path d="M0 7.500h15M7.500 0v15" stroke="#fff" strokeWidth="4" /></svg></div>
      <div className="ml-[5px] flex gap-[4px]">
        <Tab label="Dispatch Listing" w="w-[147px]" />
        <Tab label="Stock Search Results" w="w-[180px]" />
        <Tab label="Enhancements" w="w-[138px]" />
      </div>
      <div className="ml-auto flex h-full w-[40px] items-center justify-center bg-gradient-to-b from-[#cc0007] to-[#a00004]">
        <svg width="15" height="12" viewBox="0 0 15 12" className="mt-[2px]"><path d="M0 0h4v3H0zM5 0h10v3H5zM0 4.500h4v3H0zM5 4.500h10v3H5zM0 9h4v3H0zM5 9h10v3H5z" fill="#fff" /></svg>
      </div>
    </div>
  );
}
function Cell({ w, line, split, active, children }) {
  return (
    <div className={`relative flex h-[40px] items-center justify-center ${active ? 'bg-[#464646]' : ''} ${w}`}>
      {children}
      {line && <i className={`absolute bottom-0 left-0 h-[2px] bg-[#76b9ed] ${active ? 'w-[44px]' : split ? 'w-[32px]' : 'w-[40px]'}`} />}
      {split && <i className={`absolute bottom-0 h-[2px] bg-[#5a87ad] ${active ? 'right-0 w-[4px]' : 'left-[32px] w-[8px]'}`} />}
    </div>
  );
}
function Taskbar() {
  return (
    <div className={`flex h-[40px] bg-[#171717] ${rob}`}>
      <Cell w="w-[48px]"><svg width="17" height="17" viewBox="0 0 17 17"><path d="M0 2.300L7.500 1.200V8H0zM8.500 1L17 0v8H8.500zM0 9h7.500v6.800L0 14.700zM8.500 9H17v8L8.500 16z" fill="#fff" /></svg></Cell>
      <Cell w="w-[48px]"><span className="h-[16px] w-[16px] rounded-full border-[2.500px] border-white" /></Cell>
      <Cell w="w-[50px] pr-[2px]"><svg width="21" height="15" viewBox="0 0 21 15" fill="none" stroke="#fff"><path d="M4.500.8h12v13h-12zM2.500 2.500h-2v9.500h2M18.500 2.500h2v9.500h-2" strokeWidth="1.200" /></svg></Cell>
      <Cell w="w-[48px] pr-[2px]" active line split><IELogo size={25} /></Cell>
      <Cell w="w-[50px]"><span className="flex h-[23px] w-[23px] items-center justify-center rounded-[2px] bg-gradient-to-b from-[#d01015] to-[#8c0008]"><span className="scale-x-[.66] text-[12px] font-medium text-white">ASAP</span></span></Cell>
      <Cell w="ml-[4px] w-[40px]" line split><svg width="23" height="20" viewBox="0 0 23 20"><path d="M0 1h8l2 3h13v14H0z" fill="#fbd976" /><path d="M1 3h6" stroke="#e0a020" strokeWidth="1.500" /><path d="M4 12h15v8h-4v-4H8v4H4z" fill="#27b6f0" /></svg></Cell>
      <Cell w="ml-[6px] w-[44px]"><svg width="23" height="24" viewBox="0 0 23 24"><path d="M1 7v7c3 4 10 2 13-1V6z" fill="#888" /><ellipse cx="9" cy="6" rx="8.500" ry="5" fill="#f4f4f4" stroke="#d03030" strokeWidth="1.500" transform="rotate(-12 9 6)" /><path d="M5 3l14 14M11 5l3 14" stroke="#ccc" strokeWidth="1.600" /><circle cx="19.500" cy="17" r="2.600" fill="none" stroke="#3b84c8" strokeWidth="2" /><circle cx="14" cy="21" r="2.200" fill="none" stroke="#3b84c8" strokeWidth="2" /></svg></Cell>
      <Cell w="ml-[8px] w-[40px]" line split>
        <svg width="26" height="26" viewBox="0 0 26 26" className="ml-[2px]"><circle cx="11" cy="11" r="9" fill="#14a9ea" /><circle cx="6.500" cy="6" r="5.500" fill="#14a9ea" /><circle cx="16" cy="16.500" r="5.500" fill="#14a9ea" /><path d="M15 8c-1-2.800-8-2.800-8 .3 0 3.400 8 2 8 5.600 0 3.400-7.500 3.200-8.500.2" fill="none" stroke="#fff" strokeWidth="2.600" /><circle cx="19.500" cy="19.500" r="5.800" fill="#63b40c" stroke="#e6f3d8" /><path d="M17 19.500l2 2 3-4" fill="none" stroke="#fff" strokeWidth="1.600" /></svg>
      </Cell>
      <Cell w="ml-[9px] w-[40px]" line><svg width="24" height="24" viewBox="0 0 24 24"><path d="M17 1l6 2.500v17L17 23 8.500 15 4 18.500l-3-1.300V6.800l3-1.300L8.500 9zM4 9.200v5.600L7 12zM17 7l-5 5 5 5z" fill="#7a2a8e" fillRule="evenodd" stroke="#fff" strokeWidth="1.300" /></svg></Cell>
      <Cell w="ml-[9px] w-[40px]" line><svg width="22" height="22" viewBox="0 0 22 22"><circle cx="11" cy="11" r="11" fill="#f7c81e" /><path d="M11 11L1.500 5.500A11 11 0 0 1 20.500 5.500z" fill="#dd4b3e" /><path d="M1.500 5.500A11 11 0 0 0 10 22l4.500-8.500L6 13z" fill="#1da462" /><path d="M11 5.500h9.500l-5 6z" fill="#dd4b3e" /><circle cx="11" cy="11" r="5" fill="#fff" /><circle cx="11" cy="11" r="4" fill="#4c8bf5" /></svg></Cell>
      <Cell w="ml-[9px] w-[40px]" line><span className="mb-[3px] flex h-[20px] w-[20px] items-center justify-center border-[1.500px] border-[#16bdf2] bg-[#04192a] text-[12px] font-medium leading-none text-[#16bdf2]">Ps</span></Cell>
    </div>
  );
}

export default function App() {
  return (
    <div className="flex h-[1050px] w-[1680px] flex-col overflow-hidden bg-white font-['Liberation_Sans',Arial,sans-serif]">
      <Chrome />
      <Favorites />
      <AppHeader />
      <div className="flex flex-1 flex-col">
        <div className="mr-[15px] mt-[15px] flex h-[25px] w-[200px] items-center justify-between self-end rounded-[4px] border border-[#aaa] pl-[8px] pr-[8px] text-[12.500px] tracking-[0.220px] text-[#999] shadow-[0_1px_2px_rgba(0,0,0,0.15)]">
          Choose a Branch
          <span className="border-x-[4px] border-t-[6px] border-x-transparent border-t-[#777]" />
        </div>
        <div className="flex pl-[17px]">
          <div className="mt-[8px] w-[1155px]">
            <h1 className="h-[26px] text-[20px] leading-[24px] text-[#3a3a3a] [text-shadow:1px_1px_1px_#ddd]">Dispatch Mapping Screen: Dallas (441)</h1>
            <div className="flex h-[46px] items-start justify-between pr-[3px]">
              <ToolIcons />
              <div className="mt-[14px] flex items-center text-[10px] tracking-[0.150px] text-[#222]">
                Tow Area:
                <span className="ml-[3px] flex h-[22px] w-[80px] items-center justify-between border border-[#ddd] pl-[4px] pr-[5px] text-[#666]">10 mi<span className="border-x-[4px] border-t-[7px] border-x-transparent border-t-[#666]" /></span>
              </div>
            </div>
            <MapView />
            <VehiclesPanel />
          </div>
          <div className="ml-[30px] mt-[48px]"><Selected /></div>
        </div>
      </div>
      <BottomTabs />
      <Taskbar />
    </div>
  );
}
